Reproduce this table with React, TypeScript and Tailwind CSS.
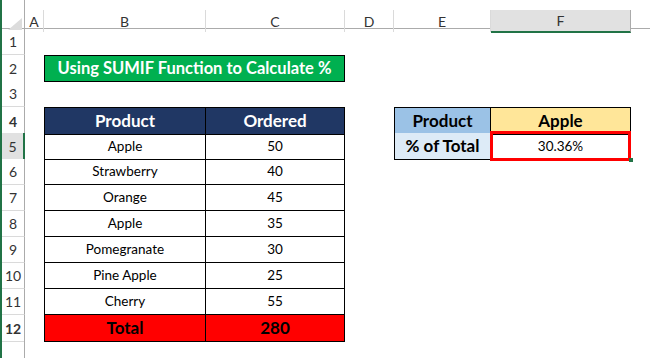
const grid = "grid grid-cols-[23px_19px_162px_139px_49px_97px_140px_1fr]";
const font = "font-['Lato','Liberation_Sans',sans-serif]";

const letters = ["A", "B", "C", "D", "E", "F", ""];

const fruits = [
  ["Strawberry", "40"],
  ["Orange", "45"],
  ["Apple", "35"],
  ["Pomegranate", "30"],
  ["Pine Apple", "25"],
  ["Cherry", "55"],
];

function RowHead({ n, active }: { n: number; active?: boolean }) {
  return (
    <div
      className={
        "flex items-end justify-center pb-[2px] border-b border-r border-b-[#dadada] text-[14px] text-[#333] " +
        (active ? "bg-[#e1e1e1] border-r-2 border-r-[#217346]" : "bg-white border-r-[#ababab]")
      }
    >
      {n}
    </div>
  );
}

function Cell({ children, className = "" }: { children?: React.ReactNode; className?: string }) {
  return <div className={"flex items-center justify-center " + className}>{children}</div>;
}

export default function App() {
  return (
    <div className={"flex h-[358px] w-[650px] overflow-hidden bg-white " + font}>
      <div className="w-[2px] shrink-0 bg-[#217346]" />
      <div className="flex-1">
        <div className={grid + " h-[10px]"}>
          <div className="border-r border-[#ababab]" />
        </div>

        {/* column headers */}
        <div className={grid + " h-[19px] border-b border-[#ababab] text-[14px] text-[#333]"}>
          <div className="relative border-r border-[#ababab]">
            <svg className="absolute bottom-[2px] right-[2px]" width="14" height="12" viewBox="0 0 14 12">
              <polygon points="14,0 14,12 0,12" fill="#dcdcdc" />
            </svg>
          </div>
          {letters.map((l, i) => (
            <div
              key={i}
              className={
                "flex items-center justify-center " +
                (l === "F"
                  ? "bg-[#e1e1e1] border-b-2 border-[#217346] border-r border-r-[#ababab] -mb-px"
                  : l
                  ? "border-r border-[#dadada]"
                  : "")
              }
            >
              {l}
            </div>
          ))}
        </div>

        {/* row 1 */}
        <div className={grid + " h-[26px]"}>
          <RowHead n={1} />
        </div>

        {/* row 2 */}
        <div className={grid + " h-[26px]"}>
          <RowHead n={2} />
          <div />
          <Cell className="col-span-2 border border-black bg-[#00b050] text-[16.5px] font-bold text-white">
            Using SUMIF Function to Calculate %
          </Cell>
        </div>

        {/* row 3 */}
        <div className={grid + " h-[26px]"}>
          <RowHead n={3} />
        </div>

        {/* row 4 */}
        <div className={grid + " h-[26px] text-[17px] font-bold"}>
          <RowHead n={4} />
          <div />
          <Cell className="border border-black bg-[#203764] text-white">Product</Cell>
          <Cell className="border-y border-r border-black bg-[#203764] text-white">Ordered</Cell>
          <div />
          <Cell className="border border-black bg-[#9bc2e6] text-black">Product</Cell>
          <Cell className="border-y border-r border-black bg-[#ffe699] text-black">Apple</Cell>
        </div>

        {/* row 5 */}
        <div className={grid + " h-[26px] text-[13.5px] text-black"}>
          <RowHead n={5} active />
          <div />
          <Cell className="border-x border-b border-black">Apple</Cell>
          <Cell className="border-r border-b border-black">50</Cell>
          <div />
          <Cell className="border-x border-b border-black bg-[#ddebf7] text-[17px] font-bold">% of Total</Cell>
          <div className="relative flex items-center justify-center border-r border-b border-black">
            30.36%
            <div className="absolute -left-px -top-[2px] -right-px -bottom-[2px] border-[3px] border-[#ff0000]" />
            <div className="absolute -bottom-[3px] -right-[3px] h-[4px] w-[4px] bg-[#217346]" />
          </div>
        </div>

        {/* rows 6-11 */}
        {fruits.map(([name, qty], i) => (
          <div key={name + i} className={grid + " h-[26px] text-[13.5px] text-black"}>
            <RowHead n={i + 6} />
            <div />
            <Cell className="border-x border-b border-black">{name}</Cell>
            <Cell className="border-r border-b border-black">{qty}</Cell>
          </div>
        ))}

        {/* row 12 */}
        <div className={grid + " h-[26px] text-[17px] font-bold text-black"}>
          <RowHead n={12} />
          <div />
          <Cell className="border-x border-b border-black bg-[#ff0000]">Total</Cell>
          <Cell className="border-r border-b border-black bg-[#ff0000]">280</Cell>
        </div>

        <div className={grid + " h-[17px]"}>
          <div className="border-r border-[#ababab]" />
        </div>
      </div>
    </div>
  );
}
